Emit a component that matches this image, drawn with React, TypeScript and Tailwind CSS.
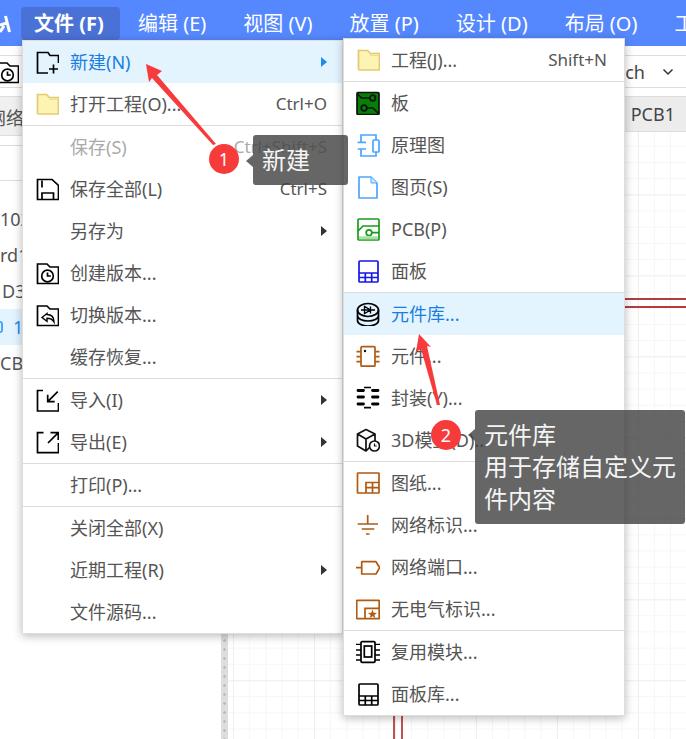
import React from 'react';

type Entry = {
  label: string;
  icon?: React.ReactNode;
  shortcut?: string;
  arrow?: boolean;
  active?: boolean;
  disabled?: boolean;
};

const Icon: React.FC<{ children: React.ReactNode; className?: string }> = ({ children, className }) => (
  <svg viewBox="0 0 24 24" fill="none" stroke="currentColor" strokeWidth={1.7} className={`w-6 h-6 shrink-0 ${className ?? ''}`}>
    {children}
  </svg>
);

const YellowFolder = () => (
  <Icon>
    <path d="M2.500 2.500h9l3 3h9v15.500a1 1 0 0 1-1 1h-19a1 1 0 0 1-1-1z" fill="#fdf3b2" stroke="#e2ca72" />
    <path d="M14.500 5.500v2h9" stroke="#efdc90" strokeWidth={1} />
  </Icon>
);

const FolderClock = ({ className }: { className?: string }) => (
  <Icon className={className}>
    <path d="M2.500 22.500V3H12l3 3h8.500v16.500z" fill="white" />
    <circle cx="12.500" cy="15" r="5.800" />
    <path d="M12.500 11.500V15h3.300" />
  </Icon>
);

const PanelIcon = ({ color }: { color: string }) => (
  <Icon className={color}>
    <rect x="3" y="2" width="19" height="21" rx="1" />
    <path d="M3 14h19M3 18.500h19M9.300 14v9M15.700 14v9" />
  </Icon>
);

const fileMenu: Entry[][] = [
  [
    {
      label: '新建(N)',
      active: true,
      arrow: true,
      icon: (
        <Icon className="text-black">
          <path d="M13 23H2.500V2.500H13l2 3h8.500V13" />
          <path d="M18.500 14.500v9M14 19h9" />
        </Icon>
      ),
    },
    { label: '打开工程(O)...', shortcut: 'Ctrl+O', icon: <YellowFolder /> },
  ],
  [
    { label: '保存(S)', shortcut: 'Ctrl+Shift+S', disabled: true },
    {
      label: '保存全部(L)',
      shortcut: 'Ctrl+S',
      icon: (
        <Icon className="text-black">
          <path d="M2.500 2.500H17l6.500 6v14h-21z" />
          <path d="M7 3.500v7M7 22v-6h11.500v6" />
        </Icon>
      ),
    },
    { label: '另存为', arrow: true },
    { label: '创建版本...', icon: <FolderClock className="text-black" /> },
    {
      label: '切换版本...',
      icon: (
        <Icon className="text-black">
          <path d="M2.500 22.500V3H12l3 3h8.500v16.500z" />
          <path d="M12 10.500 7 14.500l5 3.800v-3c3.500 0 5.500 1 7 3.700 0-5-3-7.500-7-7.500z" strokeWidth={1.400} />
        </Icon>
      ),
    },
    { label: '缓存恢复...' },
  ],
  [
    {
      label: '导入(I)',
      arrow: true,
      icon: (
        <Icon className="text-black">
          <path d="M8 2.500H2.500V23h21v-8" />
          <path d="M22.700 3.700 12.700 13.700M12.700 6.700v7h7" />
        </Icon>
      ),
    },
    {
      label: '导出(E)',
      arrow: true,
      icon: (
        <Icon className="text-black">
          <path d="M8.500 2.700h-6v20h21V13" />
          <path d="M23.300 2.700 13 13M15.500 2.700h7.800V10" />
        </Icon>
      ),
    },
  ],
  [{ label: '打印(P)...' }],
  [{ label: '关闭全部(X)' }, { label: '近期工程(R)', arrow: true }, { label: '文件源码...' }],
];

const newMenu: Entry[][] = [
  [{ label: '工程(J)...', shortcut: 'Shift+N', icon: <YellowFolder /> }],
  [
    {
      label: '板',
      icon: (
        <Icon className="text-[#111]">
          <rect x="1" y="1.500" width="22" height="22" rx="1" fill="#058005" />
          <circle cx="16.700" cy="7" r="2.800" />
          <circle cx="8" cy="17" r="2.800" />
          <path d="M1.500 3 5.500 7h8.400M10.800 17H17l5.500 5.500" />
        </Icon>
      ),
    },
    {
      label: '原理图',
      icon: (
        <Icon className="text-[#4aa5ff]">
          <path d="M5 9.300V2h15v5M5 16v7h15v-4M1.700 9.300H10M1.700 16H10" />
          <rect x="17" y="7" width="6" height="12" rx="1" />
        </Icon>
      ),
    },
    {
      label: '图页(S)',
      icon: (
        <Icon className="text-[#4aa5ff]">
          <path d="M3 2h12l6 6v15H3z" strokeLinejoin="round" />
          <path d="M15 2v6h6" fill="#cfe6ff" strokeWidth={1} />
        </Icon>
      ),
    },
    {
      label: 'PCB(P)',
      icon: (
        <Icon className="text-[#189d18]">
          <rect x="2" y="2" width="21" height="21" rx="1" />
          <circle cx="13" cy="15.700" r="2.800" />
          <path d="M2 14l5-5h16M15.800 15.700H23" />
          <path d="M3 20.800h19" stroke="#a9dda9" strokeWidth={3} />
        </Icon>
      ),
    },
    { label: '面板', icon: <PanelIcon color="text-[#1616e8]" /> },
  ],
  [
    {
      label: '元件库...',
      active: true,
      icon: (
        <Icon className="text-black">
          <ellipse cx="12" cy="8" rx="10.500" ry="6.500" />
          <path d="M1.500 8v10.500c0 3.500 5 5.500 10.500 5.500s10.500-2 10.500-5.500V8M1.500 13.500c0 3.500 5 5.500 10.500 5.500s10.500-2 10.500-5.500" />
          <path d="M8.500 4.500v7l6-3.500zM14.500 4.500v7M5 8h14" strokeWidth={1.300} />
        </Icon>
      ),
    },
    {
      label: '元件...',
      icon: (
        <Icon className="text-[#b05a12]">
          <rect x="5" y="2.700" width="14" height="19.500" rx="1" />
          <path d="M.5 7.700H5M.5 12.700H5M.5 17.700H5M19 7.700h4.500M19 12.700h4.500M19 17.700h4.500" />
          <circle cx="9" cy="7" r="1.200" fill="#111" stroke="none" />
        </Icon>
      ),
    },
    {
      label: '封装(Y)...',
      icon: (
        <Icon className="text-black">
          <path d="M8 1.500h7M8 21.700h7" />
          <path d="M2 4.500h5.500M2 11h5.500M2 18h5.500M16.500 4.500H22M16.500 11H22M16.500 18H22" strokeWidth={2.800} strokeLinecap="round" />
        </Icon>
      ),
    },
    {
      label: '3D模型(D)...',
      icon: (
        <Icon className="text-[#111]">
          <path d="M10 1.500 19 6v8L10 23 1.500 18V6zM1.500 6 10 11l9-5M10 11v12" strokeLinejoin="round" />
          <circle cx="18.500" cy="18" r="5" fill="white" />
          <path d="M18.500 15.500V18h2.200" strokeWidth={1.200} />
        </Icon>
      ),
    },
  ],
  [
    {
      label: '图纸...',
      icon: (
        <Icon className="text-[#b05a12]">
          <rect x="1.500" y="2" width="21.500" height="20" rx=".5" />
          <path d="M10 22V11.500h13M10 16.700h13M16.500 11.500V22" />
        </Icon>
      ),
    },
    {
      label: '网络标识...',
      icon: (
        <Icon className="text-[#b05a12]">
          <path d="M11.700 2v9M1.700 11H22M5.700 16h12.600M10 21h3.500" />
        </Icon>
      ),
    },
    {
      label: '网络端口...',
      icon: (
        <Icon className="text-[#b05a12]">
          <path d="M0 12.700h5.700M5.700 6.700H20l3.700 6L20 19H5.700z" strokeLinejoin="round" />
        </Icon>
      ),
    },
    {
      label: '无电气标识...',
      icon: (
        <Icon className="text-[#b05a12]">
          <rect x=".7" y="3.300" width="22.500" height="18.400" rx=".5" />
          <path d="M9 21.700V11.300h14" />
          <polygon points="16.500,12.500 17.700,15.800 21,15.900 18.400,18 19.300,21 16.500,19.300 13.700,21 14.600,18 12,15.900 15.300,15.800" fill="#b05a12" stroke="none" />
        </Icon>
      ),
    },
  ],
  [
    {
      label: '复用模块...',
      icon: (
        <Icon className="text-black">
          <rect x="5" y="1.700" width="14" height="20.600" rx="1" />
          <rect x="8.300" y="6" width="7.400" height="11" />
          <path d="M0 4.300h5M0 10h5M0 15h5M0 20h5M19 4.300h5M19 10h5M19 15h5M19 20h5" strokeWidth={1.300} />
        </Icon>
      ),
    },
    { label: '面板库...', icon: <PanelIcon color="text-black" /> },
  ],
];

const MenuRow: React.FC<{ item: Entry; padRight: string }> = ({ item, padRight }) => (
  <div
    className={`flex h-[42px] items-center pl-3 text-lg ${padRight} ${
      item.active ? 'bg-[#e3f4fe] text-[#1a7ee0]' : item.disabled ? 'text-[#aaaaaa]' : 'text-[#555555]'
    }`}
  >
    <div className="flex w-6 shrink-0 justify-center">{item.icon}</div>
    <span className="ml-[11px] flex-1 whitespace-nowrap">{item.label}</span>
    {item.shortcut && <span className="text-[17px] whitespace-nowrap">{item.shortcut}</span>}
    {item.arrow && (
      <span
        className={`h-0 w-0 border-y-[5px] border-l-[6px] border-y-transparent ${
          item.active ? 'border-l-[#1a8cf0]' : 'border-l-[#333333]'
        }`}
      />
    )}
  </div>
);

const Menu: React.FC<{ groups: Entry[][]; className: string; padRight: string }> = ({ groups, className, padRight }) => (
  <div className={`absolute border border-[#dddddd] bg-white shadow-[0_2px_9px_rgba(0,0,0,0.28)] ${className}`}>
    {groups.map((group, i) => (
      <div key={i} className={i > 0 ? 'border-t border-[#dcdcdc]' : ''}>
        {group.map((item) => (
          <MenuRow key={item.label} item={item} padRight={padRight} />
        ))}
      </div>
    ))}
  </div>
);

const topMenus = ['编辑 (E)', '视图 (V)', '放置 (P)', '设计 (D)', '布局 (O)', '工具 (T)'];

export default function App() {
  return (
    <div className="relative flex h-[739px] w-[686px] flex-col overflow-hidden bg-white font-['Noto_Sans','Noto_Sans_CJK_SC',sans-serif] text-[#555555]">
      {/* title bar */}
      <header className="flex h-[46px] shrink-0 items-start bg-[#5588ff] pt-[7px] text-[20px] text-white">
        <svg viewBox="0 0 21 33" className="h-[33px] w-[21px] shrink-0" fill="none" stroke="white" strokeWidth={3}>
          <path d="M5.500 9 9.500 25M0 18l7-2M0 25l4-6" />
        </svg>
        <div className="h-[33px] w-[99px] shrink-0 rounded-sm bg-[#4a72d6] px-[13px] font-bold leading-[33px] whitespace-nowrap">文件 (F)</div>
        {topMenus.map((m) => (
          <div key={m} className="h-[33px] shrink-0 pr-[19px] pl-[18px] leading-[33px] whitespace-nowrap">
            {m}
          </div>
        ))}
      </header>

      {/* toolbar */}
      <div className="mt-[9px] flex h-[33px] shrink-0 items-center justify-end border-y border-[#dddddd] pr-[12px]">
        <div className="mr-auto -ml-[5px]">
          <FolderClock className="text-black" />
        </div>
        <span className="text-lg text-[#444444]">ch</span>
        <svg viewBox="0 0 12 8" className="ml-[17px] h-2 w-3" fill="none" stroke="#333" strokeWidth={1.500}>
          <path d="M1.500 1.500 6 6l4.500-4.500" />
        </svg>
      </div>

      <div className="mt-2 flex min-h-0 flex-1">
        {/* left panel */}
        <aside className="flex w-[221px] shrink-0 flex-col">
          <div className="flex h-10 shrink-0 items-center overflow-hidden border-y border-[#dddddd] bg-[#f0f0f0] pt-1 text-lg">
            <span className="-ml-[12px] whitespace-nowrap">网络</span>
          </div>
          <div className="mt-[9px] h-9 shrink-0 border-y border-[#dddddd]" />
          <div className="mt-[20px] flex flex-col text-lg">
            <div className="flex h-9 items-center">102</div>
            <div className="flex h-9 items-center">rd1</div>
            <div className="flex h-9 items-center pl-0.5">D3</div>
            <div className="flex h-9 items-center bg-[#e3f4fe] text-[#1a8cf0]">
              <span className="h-3 w-[3px] rounded-r-sm border-y-2 border-r-2 border-[#4aa5ff]" />
              <span className="ml-[10px]">1</span>
            </div>
            <div className="flex h-9 items-center">CB</div>
          </div>
        </aside>

        {/* document area */}
        <main className="flex min-w-0 flex-1 flex-col">
          <div className="flex h-9 shrink-0 items-center justify-end border-y border-[#dddddd] bg-[#ececec] pr-[11px] text-lg text-[#444444]">
            PCB1
          </div>
          <div className="flex min-h-0 flex-1">
            <div className="w-[7px] shrink-0 bg-[#dddddd] bg-[radial-gradient(circle,#bbbbbb_1px,transparent_1.5px)] bg-[size:7px_9px]" />
            <div className="relative flex-1 bg-[linear-gradient(to_right,#f1efe9_1px,transparent_1px),linear-gradient(to_bottom,#f1efe9_1px,transparent_1px),linear-gradient(to_right,#f7f6f2_1px,transparent_1px),linear-gradient(to_bottom,#f7f6f2_1px,transparent_1px)] bg-[size:81px_81px,81px_81px,16.2px_16.2px,16.2px_16.2px] bg-[position:5px_62.4px,5px_62.4px,5px_13.8px,5px_13.8px]">
              <svg className="absolute inset-0 h-full w-full" fill="none">
                <path d="M300 167h158M300 175h158" stroke="#b33c3c" strokeWidth={2} />
                <path d="M166 560v47M174 560v47" stroke="#b01818" strokeWidth={1.500} />
              </svg>
            </div>
          </div>
        </main>
      </div>

      {/* open menus */}
      <Menu groups={fileMenu} className="top-[40px] left-[22px] w-[321px]" padRight="pr-[15px]" />
      <Menu groups={newMenu} className="top-[38px] left-[343px] w-[282px]" padRight="pr-[17px]" />

      {/* tutorial annotations */}
      <svg className="pointer-events-none absolute inset-0 h-full w-full" fill="#f73a3a">
        <polygon points="146,64 162,71 157,75 216,144 213,145 152,78 149,82" />
        <polygon points="419,334 431,347 427,346 440,405 437,405 421,349 416,352" />
      </svg>

      <div className="absolute top-[135px] left-[253px] flex h-[50px] w-[95px] items-center rounded-[3px] bg-[rgba(64,64,64,0.8)] pl-[9px] text-2xl text-[#f5f5f5]">
        <span className="absolute top-[20px] -left-[7px] h-0 w-0 border-y-[6px] border-r-[7px] border-y-transparent border-r-[rgba(64,64,64,0.8)]" />
        新建
      </div>
      <div className="absolute top-[144px] left-[209px] flex h-[30px] w-[30px] items-center justify-center rounded-full bg-[#f73a3a] text-lg text-white">1</div>

      <div className="absolute top-[410px] left-[475px] h-[114px] w-[210px] rounded-[3px] bg-[rgba(64,64,64,0.8)] px-[9px] pt-[9px] text-2xl leading-8 text-[#f5f5f5]">
        <span className="absolute top-[19px] -left-[7px] h-0 w-0 border-y-[6px] border-r-[7px] border-y-transparent border-r-[rgba(64,64,64,0.8)]" />
        <div>元件库</div>
        <div>用于存储自定义元件内容</div>
      </div>
      <div className="absolute top-[420px] left-[431px] flex h-[30px] w-[30px] items-center justify-center rounded-full bg-[#f73a3a] text-lg text-white">2</div>
    </div>
  );
}
